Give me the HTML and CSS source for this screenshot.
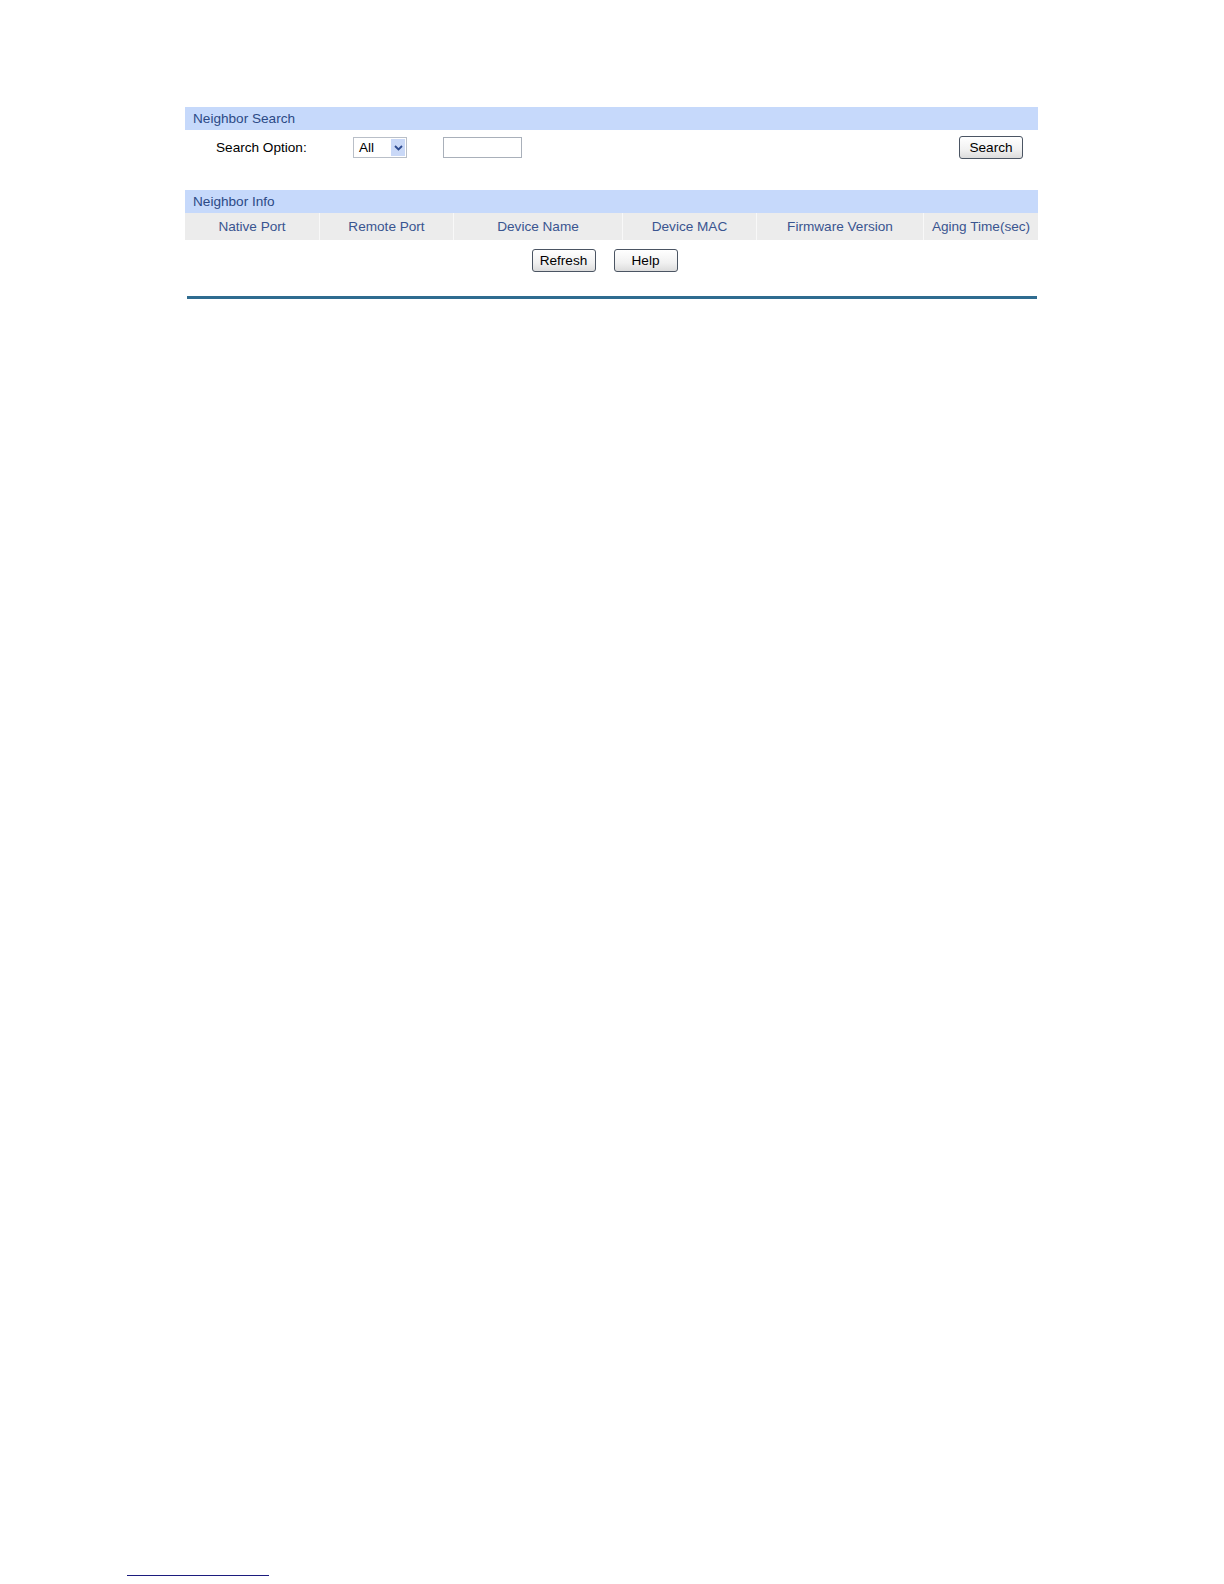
FILE: index.html
```html
<!DOCTYPE html>
<html>
<head>
<meta charset="utf-8">
<title>Neighbor Search</title>
<link rel="stylesheet" href="styles.css">
</head>
<body>
<div class="page">
  <div class="panel">
    <div class="bar">Neighbor Search</div>
    <div class="search-row">
      <span class="label">Search Option:</span>
      <span class="select">
        <span class="select-value">All</span>
        <span class="select-arrow">
          <svg width="9" height="6" viewBox="0 0 9 6"><path d="M1 1 L4.5 4.5 L8 1" fill="none" stroke="#2d4a8f" stroke-width="1.8"/></svg>
        </span>
      </span>
      <span class="text-input"></span>
      <span class="spacer"></span>
      <button class="btn btn-search">Search</button>
    </div>

    <div class="bar bar-info">Neighbor Info</div>
    <div class="thead">
      <div class="th c1">Native Port</div>
      <div class="th c2">Remote Port</div>
      <div class="th c3">Device Name</div>
      <div class="th c4">Device MAC</div>
      <div class="th c5">Firmware Version</div>
      <div class="th c6">Aging Time(sec)</div>
    </div>
    <div class="btn-row">
      <button class="btn">Refresh</button>
      <button class="btn">Help</button>
    </div>
    <div class="rule"></div>
  </div>
  <div class="filler"></div>
  <div class="footnote-rule"></div>
</div>
</body>
</html>
```

FILE: styles.css
```css
html, body {
  margin: 0;
  padding: 0;
  background: #ffffff;
}
body {
  font-family: "Liberation Sans", Arial, sans-serif;
  font-size: 13.6px;
  color: #000;
}
.page {
  width: 1224px;
  height: 1584px;
  display: flex;
  flex-direction: column;
}
.panel {
  margin: 107px 0 0 185px;
  width: 853px;
}
.bar {
  height: 23px;
  line-height: 23px;
  background: #c6d9fb;
  color: #2c4a86;
  padding-left: 8px;
}
.search-row {
  display: flex;
  align-items: center;
  height: 35px;
  padding: 0 15px 0 31px;
  margin-bottom: 25px;
}
.label {
  width: 137px;
}
.select {
  display: flex;
  align-items: center;
  width: 46px;
  height: 19px;
  border: 1px solid #b9bfc8;
  background: #fff;
  padding: 0 1px 0 5px;
}
.select-value {
  flex: 1;
}
.select-arrow {
  width: 14px;
  height: 17px;
  background: #c9d8f7;
  display: flex;
  align-items: center;
  justify-content: center;
}
.text-input {
  margin-left: 36px;
  width: 77px;
  height: 19px;
  border: 1px solid #a9b0ba;
  background: #fff;
}
.spacer {
  flex: 1;
}
.btn {
  font-family: "Liberation Sans", Arial, sans-serif;
  font-size: 13.6px;
  color: #000;
  height: 23px;
  width: 64px;
  padding: 0;
  border: 1px solid #4b5563;
  border-radius: 3px;
  background: linear-gradient(#ffffff, #f1f1f1 60%, #dcdcdc);
  line-height: 21px;
}
.thead {
  display: flex;
  height: 27px;
  background: #ececec;
  color: #3a5590;
}
.th {
  display: flex;
  align-items: center;
  justify-content: center;
  border-left: 1px solid #f8f8f8;
  box-sizing: border-box;
}
.c1 { width: 134px; border-left: none; }
.c2 { width: 134px; }
.c3 { width: 169px; }
.c4 { width: 134px; }
.c5 { width: 167px; }
.c6 { width: 115px; }
.btn-row {
  display: flex;
  justify-content: center;
  gap: 18px;
  padding: 9px 14px 0 0;
  height: 56px;
  box-sizing: border-box;
}
.rule {
  margin: 0 1px 0 2px;
  height: 3px;
  background: #2f6c90;
}
.filler {
  flex: 1;
}
.footnote-rule {
  margin: 0 0 8px 127px;
  width: 142px;
  height: 1px;
  background: #1c1c7e;
}
```
